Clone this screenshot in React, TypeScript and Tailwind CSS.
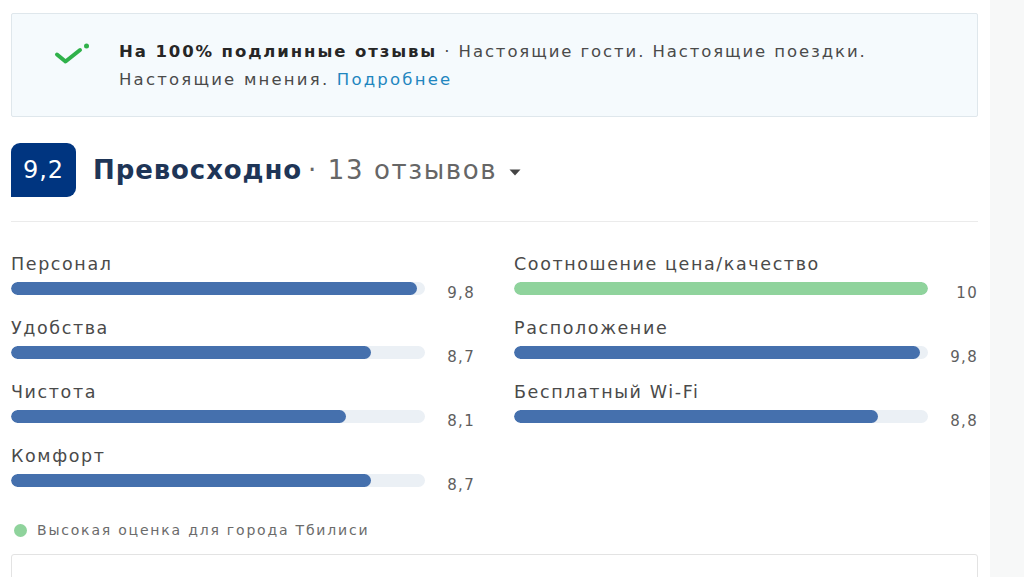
type Score = { label: string; value: number; text: string; high?: boolean }

const left: Score[] = [
  { label: "Персонал", value: 9.8, text: "9,8" },
  { label: "Удобства", value: 8.7, text: "8,7" },
  { label: "Чистота", value: 8.1, text: "8,1" },
  { label: "Комфорт", value: 8.7, text: "8,7" },
]

const right: Score[] = [
  { label: "Соотношение цена/качество", value: 10, text: "10", high: true },
  { label: "Расположение", value: 9.8, text: "9,8" },
  { label: "Бесплатный Wi-Fi", value: 8.8, text: "8,8" },
]

function CheckIcon() {
  return (
    <svg width="36" height="24" viewBox="0 0 36 24" fill="none">
      <path
        d="M3 12.5 L11.5 19.5 L26 8"
        stroke="#2fb14a"
        strokeWidth="4"
        strokeLinecap="round"
        strokeLinejoin="round"
      />
      <circle cx="32.5" cy="4" r="2.5" fill="#2fb14a" />
    </svg>
  )
}

function ScoreRow({ item }: { item: Score }) {
  return (
    <div className="flex flex-col">
      <div className="text-[17.5px] leading-[22px] tracking-[1.6px] text-[#4a4a4a]">{item.label}</div>
      <div className="mt-[7px] flex h-[13px] items-start">
        <div className="h-[13px] w-[414px] overflow-hidden rounded-full bg-[#ebf0f5]">
          <div
            className={item.high ? "h-full rounded-full bg-[#8fd39c]" : "h-full rounded-full bg-[#4570ad]"}
            style={{ width: `${item.value * 10}%` }}
          />
        </div>
        <div className="relative top-[2px] flex-1 text-right text-[15px] leading-[18px] tracking-[1.3px] text-[#5e5e5e]">
          {item.text}
        </div>
      </div>
    </div>
  )
}

export default function App() {
  return (
    <div
      className="flex h-[577px] w-[1024px] overflow-hidden bg-white"
      style={{ fontFamily: '"DejaVu Sans", "Open Sans", sans-serif' }}
    >
      <div className="flex w-[990px] shrink-0 flex-col px-[11px] pt-[13px]">
        <div className="flex h-[104px] w-[967px] shrink-0 items-start rounded-[2px] border border-[#dfe7ec] bg-[#f5fafd] pt-[24px] pl-[42px]">
          <div className="mt-[4px] w-[65px] shrink-0">
            <CheckIcon />
          </div>
          <p className="text-[16.5px] leading-[28px] tracking-[1.9px] text-[#4a4a4a]">
            <span className="font-bold text-[#262626]">На 100% подлинные отзывы</span>
            {" · Настоящие гости. Настоящие поездки."}
            <br />
            <span className="tracking-[2.2px]">{"Настоящие мнения. "}</span>
            <span className="tracking-[2.2px] text-[#1f86bf]">Подробнее</span>
          </p>
        </div>

        <div className="mt-[26px] flex shrink-0 items-center">
          <div className="flex h-[54px] w-[65px] items-center justify-center rounded-t-[9px] rounded-br-[9px] bg-[#003580] text-[24px] tracking-[1px] text-white">
            9,2
          </div>
          <div className="ml-[17px] flex items-center text-[26px] leading-[32px]">
            <span className="font-bold tracking-[0.9px] text-[#1e3557]">Превосходно</span>
            <span className="ml-[6px] tracking-[1.6px] text-[#666]">· 13 отзывов</span>
            <svg width="12" height="7" viewBox="0 0 12 7" className="ml-[12px] mt-[4px]">
              <path d="M0.5 0.5 L11.5 0.5 L6 6.5 Z" fill="#444" />
            </svg>
          </div>
        </div>

        <div className="mt-[24px] h-px w-[967px] shrink-0 bg-[#ebebeb]" />

        <div className="mt-[31px] grid w-[967px] shrink-0 grid-cols-2 gap-x-[39px]">
          <div className="flex flex-col gap-[22px]">
            {left.map((s) => (
              <ScoreRow key={s.label} item={s} />
            ))}
          </div>
          <div className="flex flex-col gap-[22px]">
            {right.map((s) => (
              <ScoreRow key={s.label} item={s} />
            ))}
          </div>
        </div>

        <div className="mt-[34px] flex shrink-0 items-center">
          <span className="ml-[3px] h-[13px] w-[13px] rounded-full bg-[#8fd39c]" />
          <span className="ml-[10px] text-[14px] leading-[18px] tracking-[1.8px] text-[#6b6b6b]">
            Высокая оценка для города Тбилиси
          </span>
        </div>

        <div className="mt-[15px] h-[60px] w-[967px] shrink-0 rounded-t-[3px] border border-[#e3e3e3]" />
      </div>
      <div className="flex-1 bg-[#f7f8f8]" />
    </div>
  )
}
